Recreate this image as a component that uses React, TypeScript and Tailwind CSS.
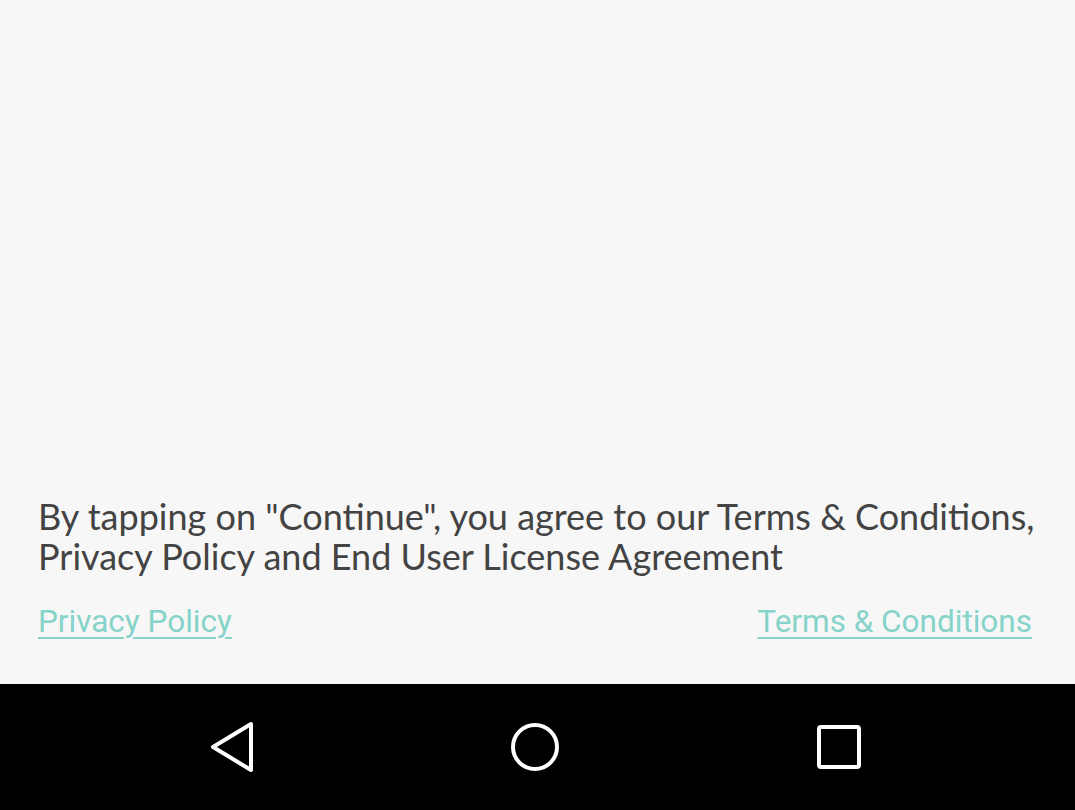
export default function App() {
  return (
    <div className="w-[1075px] h-[810px] flex flex-col bg-[#f7f7f7]">
      {/* Agreement */}
      <div className="flex-1 flex flex-col justify-end pl-[38px] pr-[43px] pb-[44px]">
        <p className="font-['Lato',sans-serif] text-[36px] leading-[40px] text-[#434343] whitespace-nowrap">
          By tapping on "Continue", you agree to our Terms &amp; Conditions,
          <br />
          Privacy Policy and End User License Agreement
        </p>
        <div className="mt-[28px] flex items-center justify-between font-['Roboto',sans-serif] text-[31.5px] leading-[36px] text-[#85d3c9]">
          <a href="#" className="underline underline-offset-[5px] decoration-[2px]">Privacy Policy</a>
          <a href="#" className="underline underline-offset-[5px] decoration-[2px]">Terms &amp; Conditions</a>
        </div>
      </div>

      {/* Nav bar */}
      <div className="h-[126px] bg-black flex items-center pl-[207px] gap-[256px]">
        <svg width="48" height="52" viewBox="0 0 48 52" fill="none" stroke="white" strokeWidth="4" strokeLinejoin="round">
          <path d="M44 3 L6 26 L44 49 Z" />
        </svg>
        <svg width="48" height="48" viewBox="0 0 48 48" fill="none" stroke="white" strokeWidth="4">
          <circle cx="24" cy="24" r="22" />
        </svg>
        <svg width="48" height="48" viewBox="0 0 48 48" fill="none" stroke="white" strokeWidth="4">
          <rect x="4" y="4" width="40" height="40" rx="2" />
        </svg>
      </div>
    </div>
  )
}
